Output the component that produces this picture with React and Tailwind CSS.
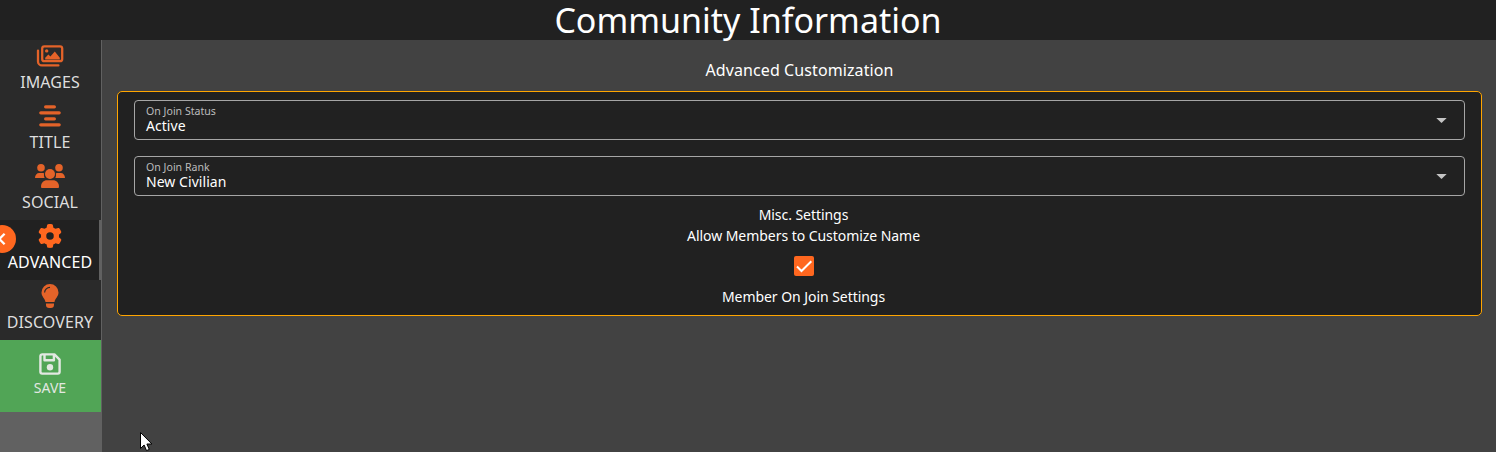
import { FaGear } from "react-icons/fa6";

function ImagesIcon() {
  return (
    <svg width="28" height="24" viewBox="0 0 28 24" fill="none" stroke="currentColor" strokeWidth="2.3" strokeLinecap="round">
      <rect x="6.2" y="2.4" width="20" height="14.8" rx="2.2" />
      <path d="M2 6.6v10.8a4 4 0 0 0 4 4h16.4" />
      <circle cx="10.7" cy="6.9" r="1.7" fill="currentColor" stroke="none" />
      <path d="M9.2 15.4v-1.6l3.2-3.2 2 2 4.4-5.2 5 6.4v1.6z" fill="currentColor" stroke="none" />
    </svg>
  );
}

function CenteredLines() {
  return (
    <svg width="24" height="24" viewBox="0 0 24 24" fill="currentColor">
      <rect x="6" y="1.2" width="12" height="3.2" rx="1.6" />
      <rect x="1.2" y="7.2" width="21.6" height="3.2" rx="1.6" />
      <rect x="6" y="13.2" width="12" height="3.2" rx="1.6" />
      <rect x="1.2" y="19.2" width="21.6" height="3.2" rx="1.6" />
    </svg>
  );
}

function PeopleIcon() {
  return (
    <svg width="30" height="24" viewBox="0 0 30 24" fill="currentColor">
      <circle cx="6" cy="3.8" r="3.8" />
      <circle cx="24" cy="3.8" r="3.8" />
      <circle cx="15" cy="10" r="5" />
      <path d="M0 14c0-3 1.8-5 4.2-5h3.2c.7 0 1.2.1 1.7.4C8.8 11 9 12.6 9.7 14zM30 14c0-3-1.8-5-4.2-5h-3.2c-.7 0-1.2.1-1.7.4.3 1.6.1 3.2-.6 4.6z" />
      <path d="M6 22.7c0-4 2.6-6.5 6-6.5h6c3.4 0 6 2.5 6 6.5 0 .8-.5 1.3-1.3 1.3H7.3C6.5 24 6 23.5 6 22.7z" />
    </svg>
  );
}

function BulbIcon() {
  return (
    <svg width="18" height="24" viewBox="0 0 18 24" fill="currentColor">
      <path fillRule="evenodd" d="M9 0a8.5 8.5 0 0 1 8.5 8.5c0 4.1-3.4 5.8-4 9.5H4.5c-.6-3.7-4-5.400-4-9.500A8.500 8.500 0 0 1 9 0zM4.200 8.500A4.800 4.800 0 0 1 9 3.900V2.700a6 6 0 0 0-6 5.800z" />
      <path d="M5 19.5h8v1.3A3.200 3.200 0 0 1 9.800 24H8.200A3.200 3.200 0 0 1 5 20.800z" />
    </svg>
  );
}

function SaveIcon() {
  return (
    <svg width="24" height="24" viewBox="0 0 24 24" fill="none" stroke="currentColor" strokeWidth="2.4" strokeLinejoin="round">
      <path d="M4.200 2.400h12.200l5.200 5.200v12.200a1.800 1.800 0 0 1-1.800 1.800H4.200a1.800 1.800 0 0 1-1.800-1.800V4.200a1.800 1.800 0 0 1 1.800-1.800z" />
      <path d="M6.500 2.400v5.800h9.400V2.400" />
      <circle cx="12" cy="15.200" r="3.200" fill="currentColor" stroke="none" />
    </svg>
  );
}

const tabs = [
  { label: "IMAGES", Icon: ImagesIcon },
  { label: "TITLE", Icon: CenteredLines },
  { label: "SOCIAL", Icon: PeopleIcon },
  { label: "ADVANCED", Icon: FaGear, active: true },
  { label: "DISCOVERY", Icon: BulbIcon },
];

function Tab({ label, Icon, active }) {
  return (
    <div className={active ? "relative h-[60px] border-r-2 border-[#616161] bg-[#212121] text-white" : "relative h-[60px] bg-[#2a2a2a] text-[#dedede]"}>
      <div className="flex w-[100px] flex-col items-center">
        <div className={active ? "flex h-8 w-full items-center justify-center text-[#ff671f]" : "flex h-8 w-full items-center justify-center text-[#e46329]"}>
          <Icon size={24} />
        </div>
        <div className="text-base leading-5 tracking-[0.09px] whitespace-nowrap">{label}</div>
      </div>
      {active && (
        <div className="absolute top-[5px] -left-3 flex size-7 items-center justify-center rounded-full bg-[#ff671f] text-white">
          <svg width="10" height="14" viewBox="0 0 10 14" fill="none" stroke="currentColor" strokeWidth="2.3">
            <path d="M7.600 1.800 2.400 7l5.200 5.200" />
          </svg>
        </div>
      )}
    </div>
  );
}

function Select({ label, value }) {
  return (
    <div className="flex h-10 items-center justify-between rounded border border-[#a6a6a6] pr-[17px] pl-[11px]">
      <div className="flex flex-col pb-0.5">
        <span className="text-[10.6px] leading-[14px] text-[#bcbcbc]">{label}</span>
        <span className="text-sm leading-4 tracking-[0.05px] text-white">{value}</span>
      </div>
      <svg width="11" height="5" viewBox="0 0 11 5" className="text-[#c4c4c4]">
        <path d="M.3 0h10.400L5.500 5z" fill="currentColor" />
      </svg>
    </div>
  );
}

export default function App() {
  return (
    <div className="relative flex h-[452px] w-[1496px] flex-col overflow-hidden bg-[#424242] font-['Noto_Sans',sans-serif] text-white">
      <header className="h-10 bg-[#212121] text-center text-[34px] leading-10">Community Information</header>
      <div className="flex flex-1">
        <aside className="flex w-[102px] flex-col border-r border-[#616161] bg-[#616161]">
          {tabs.map((tab) => (
            <Tab key={tab.label} {...tab} />
          ))}
          <button className="flex h-[72px] flex-col items-center bg-[#51a556] pt-3 pr-px text-[#e2e8e2]">
            <SaveIcon />
            <span className="mt-0.5 text-sm leading-5">SAVE</span>
          </button>
        </aside>
        <main className="flex flex-1 flex-col px-[15px] pt-5 pr-[14px]">
          <h2 className="text-center text-base leading-5 tracking-[0.1px]">Advanced Customization</h2>
          <section className="mt-[11px] flex h-[225px] flex-col rounded-[5px] border border-[#ffa500] bg-[#212121] px-4 pt-2">
            <div className="flex flex-col gap-4">
              <Select label="On Join Status" value="Active" />
              <Select label="On Join Rank" value="New Civilian" />
            </div>
            <div className="flex flex-col items-center pt-2 pl-2 text-sm leading-[21px] tracking-[-0.05px]">
              <p>Misc. Settings</p>
              <p>Allow Members to Customize Name</p>
              <div className="my-[10px] flex size-5 items-center justify-center rounded-xs bg-[#ff671f]">
                <svg width="20" height="20" viewBox="0 0 20 20" fill="none" stroke="white" strokeWidth="2">
                  <path d="M3 10.5 7.5 15 17.3 5.2" />
                </svg>
              </div>
              <p>Member On Join Settings</p>
            </div>
          </section>
        </main>
      </div>
      <svg className="absolute top-[432px] left-[140px]" width="13" height="20" viewBox="0 0 13 20">
        <path d="M.5.5v16l3.6-3.5 2.4 5.6 2.8-1.2-2.4-5.4h5z" fill="white" stroke="black" />
      </svg>
    </div>
  );
}
